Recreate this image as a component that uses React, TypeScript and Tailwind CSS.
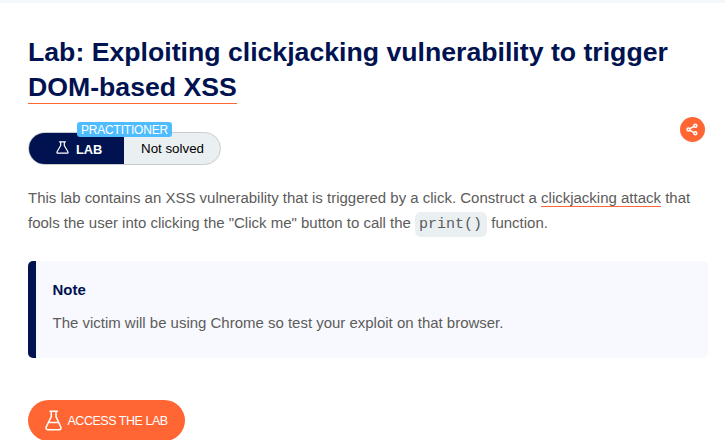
function Flask({ className }: { className: string }) {
  return (
    <svg className={className} viewBox="0 0 18 21" fill="none" stroke="currentColor" strokeWidth="1.500" strokeLinejoin="round" strokeLinecap="round">
      <path d="M5 1.200h7.400M6.300 1.200v5.400L1.400 16.600c-1 2 0 3.200 1.600 3.200h11c1.600 0 2.600-1.200 1.600-3.200L11 6.600V1.200" />
      <path d="M4.700 12.400h7.600" />
    </svg>
  );
}

function SmallFlask({ className }: { className: string }) {
  return (
    <svg className={className} viewBox="0 0 13 13" fill="none" stroke="currentColor" strokeWidth="1.200" strokeLinejoin="round" strokeLinecap="round">
      <path d="M3.500.8h6M4.700.8v3.700L1.100 10.700c-.5 1 0 1.500.8 1.500h9.200c.8 0 1.300-.5.8-1.500L8.300 4.500V.8" />
    </svg>
  );
}

export default function App() {
  return (
    <div className="h-[440px] w-[725px] overflow-hidden bg-white font-['Liberation_Sans',Arial,sans-serif] text-[14.970px] text-[#5c5c5b]">
      <div className="h-[3px] bg-[#f2f9fc]" />
      <main className="pt-8 pr-[17px] pl-7">
        <h1 className="h-[69px] text-[26.670px] leading-[35px] font-bold whitespace-nowrap text-[#001350]">
          Lab: Exploiting clickjacking vulnerability to trigger
          <br />
          <span className="inline-block h-[34px] border-b border-[#ff6633]">DOM-based XSS</span>
        </h1>

        <div className="mt-[13px] flex h-[49px] items-start justify-between">
          <div className="relative mt-[15px] flex h-[33px] w-[193px] rounded-full border border-[#c8cdd0] bg-[#eaeff2] text-[13.330px] leading-[31px]">
            <div className="flex w-[95px] items-center rounded-l-full bg-[#001350] pl-[27px] text-[12.800px] font-bold text-white">
              <SmallFlask className="mr-[7px] -mt-0.5 size-[13px]" />
              <span className="pt-px">LAB</span>
            </div>
            <span className="pl-[17px] text-black">Not solved</span>
            <span className="absolute -top-[11px] left-12 flex h-[15px] w-[95px] items-center justify-center rounded-[3px] bg-[#4fbcff] pt-px text-[12px] leading-[14px] tracking-[-0.2px] text-white">
              PRACTITIONER
            </span>
          </div>
          <button className="mr-[3px] flex size-[25px] items-center justify-center rounded-full bg-[#ff6633] text-white">
            <svg className="size-[13px]" viewBox="0 0 13 13" fill="none" stroke="currentColor" strokeWidth="1.500">
              <path d="M8 3.400 4 5.700M4 7.300 8 9.600" />
              <circle cx="9.300" cy="2.700" r="1.500" />
              <circle cx="2.500" cy="6.500" r="1.500" />
              <circle cx="9.300" cy="10.300" r="1.500" />
            </svg>
          </button>
        </div>

        <p className="mt-[19px] text-[14.990px] leading-[25px] whitespace-nowrap">
          This lab contains an XSS vulnerability that is triggered by a click. Construct a{' '}
          <a className="inline-block h-[18px] border-b border-[#ff6633] leading-[17px]">clickjacking attack</a> that
          <br />
          fools the user into clicking the "Click me" button to call the{' '}
          <code className="inline-block h-[25px] w-[72px] rounded-[6px] bg-[#eaeff2] pl-1 align-middle font-['Liberation_Mono','Courier_New',monospace] text-[15px] leading-[25px]">
            print()
          </code>{' '}
          function.
        </p>

        <section className="mt-6 h-[97px] w-[680px] rounded-[5px] border-l-8 border-[#001350] bg-[#f8f9fe] pt-4 pl-[16.500px] leading-[25px]">
          <h2 className="font-bold text-[#001350]">Note</h2>
          <p className="mt-2">The victim will be using Chrome so test your exploit on that browser.</p>
        </section>

        <button className="mt-[42px] flex h-[41px] w-[157px] items-center rounded-full bg-[#ff6633] pl-[17px] text-[12.500px] tracking-[-0.470px] text-white">
          <Flask className="mr-[4.500px] h-[21px] w-[18px]" />
          <span className="pt-0.5">ACCESS THE LAB</span>
        </button>
      </main>
    </div>
  );
}
